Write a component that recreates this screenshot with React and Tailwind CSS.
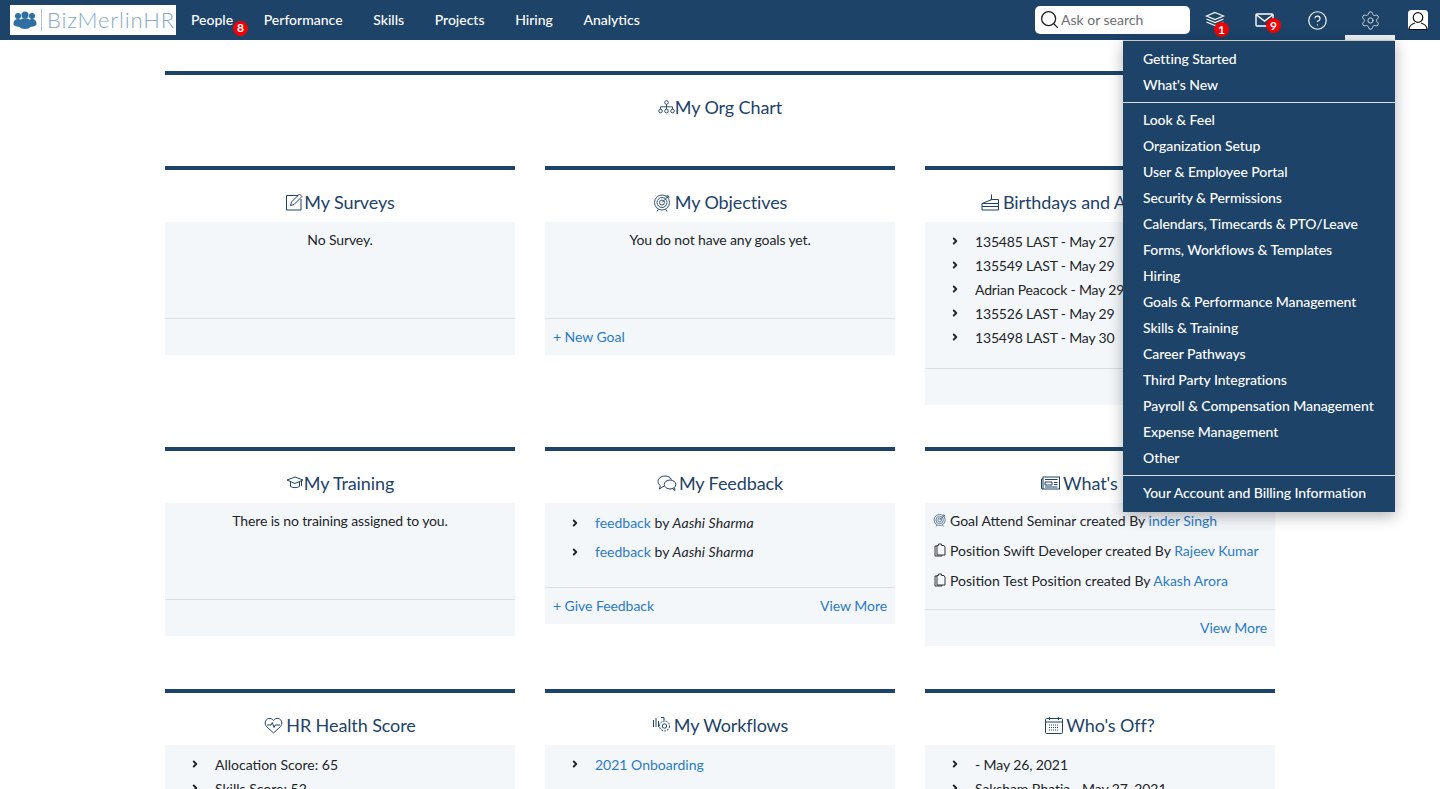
import React from "react";
import { Search, ChevronRight, CircleHelp, Settings } from "lucide-react";

const navItems = ["People", "Performance", "Skills", "Projects", "Hiring", "Analytics"];

const menuGroups = [
  ["Getting Started", "What's New"],
  [
    "Look & Feel",
    "Organization Setup",
    "User & Employee Portal",
    "Security & Permissions",
    "Calendars, Timecards & PTO/Leave",
    "Forms, Workflows & Templates",
    "Hiring",
    "Goals & Performance Management",
    "Skills & Training",
    "Career Pathways",
    "Third Party Integrations",
    "Payroll & Compensation Management",
    "Expense Management",
    "Other",
  ],
  ["Your Account and Billing Information"],
];

function Badge({ n, className }) {
  return (
    <span className={`absolute flex h-[15px] w-[15px] items-center justify-center rounded-full bg-[#f00000] text-[12px] font-bold leading-none text-white ${className}`}>
      {n}
    </span>
  );
}

function LogoMark() {
  return (
    <svg width="24" height="20" viewBox="0 0 24 20" fill="#2f6ea5">
      <circle cx="5" cy="6" r="3" />
      <circle cx="19" cy="6" r="3" />
      <circle cx="12" cy="5" r="3.6" />
      <path d="M0.5 14c0-3.5 2-5 4.5-5s3 1 3 1v7c-4 0-7.500-1-7.500-3z" />
      <path d="M23.500 14c0-3.500-2-5-4.500-5s-3 1-3 1v7c4 0 7.500-1 7.500-3z" />
      <path d="M6.500 13c0-3.500 2.500-4.800 5.500-4.800s5.500 1.300 5.500 4.800v3c0 2-2.500 3-5.500 3s-5.500-1-5.500-3z" />
    </svg>
  );
}

function LayersIcon() {
  return (
    <svg width="20" height="18" viewBox="0 0 20 18" fill="none" stroke="#fff" strokeWidth="1.200">
      <path d="M10 1.500 18.500 5 10 8.500 1.500 5z" />
      <path d="M1.500 8 10 11.500 18.500 8" />
      <path d="M1.500 11 10 14.500 18.500 11" />
    </svg>
  );
}

function MailIcon() {
  return (
    <svg width="19" height="14" viewBox="0 0 19 14" fill="none" stroke="#fff" strokeWidth="1.400">
      <rect x="1" y="1" width="17" height="12" rx="1" />
      <path d="m1 1.500 8.500 6.500L18 1.500" />
    </svg>
  );
}

function UserIcon() {
  return (
    <svg width="20" height="20" viewBox="0 0 20 20">
      <rect width="20" height="20" rx="3.500" fill="#fff" />
      <circle cx="10" cy="7.500" r="4.800" fill="none" stroke="#111" strokeWidth="1.200" />
      <path d="M1 19.500c0-3.500 3.500-5.800 6-6.500M19 19.500c0-3.500-3.500-5.800-6-6.500M1 19.500h18" fill="none" stroke="#111" strokeWidth="1.200" />
    </svg>
  );
}

function OrgIcon() {
  return (
    <svg width="17" height="14" viewBox="0 0 17 14" fill="none" stroke="#1d4369" strokeWidth="0.900">
      <circle cx="8.500" cy="2.500" r="1.800" />
      <circle cx="2.500" cy="11" r="1.800" />
      <circle cx="8.500" cy="11" r="1.800" />
      <circle cx="14.500" cy="11" r="1.800" />
      <path d="M8.500 4.300v4.900M2.500 9.200V6.800h12v2.400" />
    </svg>
  );
}

function SurveyIcon() {
  return (
    <svg width="19" height="18" viewBox="0 0 19 18" fill="none" stroke="#1d4369" strokeWidth="1">
      <path d="M13 2.500H1.500v14.500h14.500V6" />
      <path d="m5.500 12.500 1-3.500 8-8 2.500 2.500-8 8z" />
    </svg>
  );
}

function TargetIcon({ size = 19 }) {
  return (
    <svg width={size} height={size} viewBox="0 0 19 19" fill="none" stroke="#1d4369" strokeWidth="0.900">
      <circle cx="9" cy="9.500" r="7.500" />
      <circle cx="9" cy="9.500" r="5" />
      <circle cx="9" cy="9.500" r="2.500" />
      <path d="M9 9.500 15.500 3M13.500 2.500l2 .5.500 2M5 16.500l-1 2M13 16.500l1 2" />
    </svg>
  );
}

function CakeIcon() {
  return (
    <svg width="19" height="18" viewBox="0 0 19 18" fill="none" stroke="#1d4369" strokeWidth="1">
      <path d="M1 10.500 11 6.500h6.500v4H1zM1 10.500V17h16.500v-6.500M1 13.500h16.500" />
      <path d="M10.500 6.500V1.500M9.500 6.500h2" />
    </svg>
  );
}

function HatIcon() {
  return (
    <svg width="18" height="14" viewBox="0 0 18 14" fill="none" stroke="#1d4369" strokeWidth="1">
      <path d="M1 4 9 1l8 3-8 3.500z" />
      <path d="M4.500 6v4.500c2 1.500 7 1.500 9 0V6M15.500 5v5" />
    </svg>
  );
}

function ChatIcon() {
  return (
    <svg width="20" height="17" viewBox="0 0 20 17" fill="none" stroke="#1d4369" strokeWidth="1">
      <path d="M7 11.500H6L2.500 14l.8-3.500C1.800 9.500 1 8 1 6.500 1 3.500 4 1 8 1c3 0 5.500 1.300 6.500 3.500" />
      <ellipse cx="13" cy="9.500" rx="5.800" ry="4.500" />
      <path d="m15.500 13.500 2.500 2-.5-3" />
    </svg>
  );
}

function NewsIcon() {
  return (
    <svg width="19" height="14" viewBox="0 0 19 14" fill="none" stroke="#1d4369" strokeWidth="1">
      <rect x="2" y="1" width="16.500" height="12" />
      <path d="M2 3H.5v9.500L2 13M4 3.500h12.500M4 11h12.500M4 6h7v3H4zM13 6.500h3.500M13 8.500h3.500" />
    </svg>
  );
}

function ClipIcon() {
  return (
    <svg width="12" height="14" viewBox="0 0 12 14" fill="none" stroke="#333" strokeWidth="1">
      <path d="M3 3H1v10h7v-1" />
      <path d="M3 2.500h1.500V1h3v1.500H10L11 4v8H3z" />
    </svg>
  );
}

function HeartIcon() {
  return (
    <svg width="19" height="17" viewBox="0 0 19 17" fill="none" stroke="#1d4369" strokeWidth="1">
      <path d="M9.500 16 2.500 9.500C.2 7 1 2.500 4.500 1.500c2-.5 4 .3 5 2 1-1.700 3-2.500 5-2C18 2.500 18.800 7 16.500 9.500z" />
      <path d="M3 8h4l1.300-2.500 1.700 5 1.200-2.500H16" />
    </svg>
  );
}

function WorkflowIcon() {
  return (
    <svg width="20" height="18" viewBox="0 0 20 18" fill="none" stroke="#1d4369" strokeWidth="1">
      <path d="M1.500 4v7M4 2v9M6.500 5v6" />
      <circle cx="12.500" cy="10" r="2.200" />
      <circle cx="12.500" cy="10" r="5" strokeDasharray="2 1" />
      <path d="M9 1.500h3v3" />
    </svg>
  );
}

function CalendarIcon() {
  return (
    <svg width="18" height="17" viewBox="0 0 18 17" fill="none" stroke="#1d4369" strokeWidth="1">
      <rect x="0.500" y="1.500" width="17" height="15" rx="1" />
      <path d="M.5 5h17M4.500 0v3M13.500 0v3" />
      <path d="M4 8h10M4 10.500h10M4 13h10" strokeDasharray="1 1" />
    </svg>
  );
}

function Title({ icon, children }) {
  return (
    <div className="flex h-[52px] items-start justify-center pt-[20px] text-[18px] leading-[24px] tracking-[-0.1px] text-[#1d4369]">
      <span className="flex h-[24px] items-center">{icon}</span>
      <span>{children}</span>
    </div>
  );
}

function Card({ title, icon, footer, children }) {
  return (
    <section className="border-t-4 border-[#1d4369]">
      <Title icon={icon}>{title}</Title>
      <div className="bg-[#f4f7fa]">{children}</div>
      {footer !== undefined && (
        <div className="flex h-[37px] items-center justify-between border-t border-[#dcdfe2] bg-[#f4f7fa] px-2 pb-[2px] text-[14px] tracking-[-0.05px] text-[#2a7ac7]">
          {footer}
        </div>
      )}
    </section>
  );
}

function Bullet({ children, className = "h-[24px]" }) {
  return (
    <li className={`flex items-center pl-[25px] ${className}`}>
      <span className="flex w-[25px] shrink-0">
        <ChevronRight size={10} strokeWidth={4.5} className="text-[#212529]" />
      </span>
      <span className="whitespace-nowrap">{children}</span>
    </li>
  );
}

function Message({ children }) {
  return <div className="h-[96px] pt-[7px] text-center text-[14px] leading-[21px] tracking-[-0.13px] text-[#212529]">{children}</div>;
}

function Activity({ icon, children }) {
  return (
    <div className="flex h-[30px] items-center gap-[3px] whitespace-nowrap pl-[7px]">
      <span className="flex w-[15px] justify-center">{icon}</span>
      <span>{children}</span>
    </div>
  );
}

export default function App() {
  return (
    <div className="relative h-screen overflow-hidden bg-white font-['Lato','Open_Sans',sans-serif] text-[14px] text-[#212529]">
      {/* top nav */}
      <header className="flex h-[40px] items-center justify-between bg-[#1d4369]">
        <div className="flex items-center">
          <div className="ml-[10px] flex h-[30px] w-[166px] items-center bg-white pl-[3px]">
            <LogoMark />
            <span className="ml-[4px] h-[22px] w-px bg-[#a9c2d8]" />
            <span className="ml-[5px] text-[22px] font-light leading-none tracking-[0.85px] text-[#86a9c8]">BizMerlinHR</span>
          </div>
          <nav className="ml-[15px] flex gap-[30.6px] pb-[2px] font-medium text-white">
            {navItems.map((item) => (
              <a key={item} className="relative block">
                {item}
                {item === "People" && <Badge n="8" className="left-[42px] top-[12px]" />}
              </a>
            ))}
          </nav>
        </div>
        <div className="flex h-full items-center text-white">
          <div className="flex h-[28px] w-[155px] items-center rounded-[5px] bg-white pb-[1px] pl-[4px] text-[#6b6f73]">
            <Search size={21} strokeWidth={1.500} className="text-[#222]" />
            <span className="ml-[1px]">Ask or search</span>
          </div>
          <div className="relative flex h-full w-[49px] items-center justify-center">
            <LayersIcon />
            <Badge n="1" className="left-[24px] top-[22px]" />
          </div>
          <div className="relative flex h-full w-[50px] items-center justify-center">
            <MailIcon />
            <Badge n="9" className="left-[27px] top-[18px]" />
          </div>
          <div className="flex h-full w-[56px] items-center justify-center">
            <CircleHelp size={21} strokeWidth={1.300} />
          </div>
          <div className="flex h-full w-[50px] items-center justify-center border-b-[5px] border-[#eef1f3] pt-[5px]">
            <Settings size={21} strokeWidth={1.100} className="text-[#d5dbe1]" />
          </div>
          <div className="flex h-full w-[45px] items-center justify-center">
            <UserIcon />
          </div>
        </div>
      </header>

      {/* settings menu */}
      <div className="absolute left-[1123px] top-[40px] z-10 w-[272px] border-t border-[#c9c9c9] bg-[#1d4369] font-medium tracking-[-0.06px] text-white shadow-[0_4px_14px_rgba(0,0,0,0.3)]">
        {menuGroups.map((group, i) => (
          <ul key={i} className={i === 0 ? "pb-[5px] pt-[4px]" : i === 1 ? "border-t border-[#d8dde3] pb-[5px] pt-[3px]" : "border-t border-[#d8dde3] pb-[7px] pt-[3px]"}>
            {group.map((item) => (
              <li key={item} className="flex h-[26px] items-center whitespace-nowrap pl-[20px]">{item}</li>
            ))}
          </ul>
        ))}
      </div>

      <main className="mx-auto mt-[31px] w-[1110px]">
        <section className="h-[95px] border-t-4 border-[#1d4369]">
          <Title icon={<OrgIcon />}>My Org Chart</Title>
        </section>

        <div className="mb-[42px] grid grid-cols-3 items-start gap-x-[30px]">
          <Card title="My Surveys" icon={<SurveyIcon />} footer="">
            <Message>No Survey.</Message>
          </Card>
          <Card
            title="My Objectives"
            icon={<span className="mr-[3px]"><TargetIcon /></span>}
            footer={<a>+ New Goal</a>}
          >
            <Message>You do not have any goals yet.</Message>
          </Card>
          <Card title="Birthdays and Anniversaries" icon={<span className="mr-[3px]"><CakeIcon /></span>} footer="">
            <ul className="h-[146px] pt-[7px] tracking-[-0.18px]">
              <Bullet>135485 LAST - May 27</Bullet>
              <Bullet>135549 LAST - May 29</Bullet>
              <Bullet>Adrian Peacock - May 29</Bullet>
              <Bullet>135526 LAST - May 29</Bullet>
              <Bullet>135498 LAST - May 30</Bullet>
            </ul>
          </Card>
        </div>

        <div className="mb-[43px] grid grid-cols-3 items-start gap-x-[30px]">
          <Card title="My Training" icon={<HatIcon />} footer="">
            <Message>There is no training assigned to you.</Message>
          </Card>
          <Card
            title="My Feedback"
            icon={<span className="mr-[2px]"><ChatIcon /></span>}
            footer={
              <>
                <a>+ Give Feedback</a>
                <a>View More</a>
              </>
            }
          >
            <ul className="h-[84px] pt-[5px]">
              <Bullet className="h-[29px]"><a className="text-[#2a7ac7]">feedback</a> by <em className="tracking-[0.1px]">Aashi Sharma</em></Bullet>
              <Bullet className="h-[29px]"><a className="text-[#2a7ac7]">feedback</a> by <em className="tracking-[0.1px]">Aashi Sharma</em></Bullet>
            </ul>
          </Card>
          <Card
            title="What's New"
            icon={<span className="mr-[3px] flex"><NewsIcon /></span>}
            footer={
              <>
                <span />
                <a>View More</a>
              </>
            }
          >
            <div className="h-[106px] pt-[2px]">
              <Activity icon={<TargetIcon size={14} />}>Goal Attend Seminar created By <a className="text-[#2a7ac7]">inder Singh</a></Activity>
              <Activity icon={<ClipIcon />}>Position Swift Developer created By <a className="text-[#2a7ac7]">Rajeev Kumar</a></Activity>
              <Activity icon={<ClipIcon />}>Position Test Position created By <a className="text-[#2a7ac7]">Akash Arora</a></Activity>
            </div>
          </Card>
        </div>

        <div className="grid grid-cols-3 items-start gap-x-[30px]">
          <Card title="HR Health Score" icon={<span className="mr-[3px]"><HeartIcon /></span>}>
            <ul className="pt-[7px]">
              <Bullet>Allocation Score: 65</Bullet>
              <Bullet>Skills Score: 52</Bullet>
            </ul>
          </Card>
          <Card title="My Workflows" icon={<span className="mr-[2px]"><WorkflowIcon /></span>}>
            <ul className="pt-[7px]">
              <Bullet><a className="text-[#2a7ac7]">2021 Onboarding</a></Bullet>
              <li className="h-[24px]" />
            </ul>
          </Card>
          <Card title="Who's Off?" icon={<span className="mr-[3px]"><CalendarIcon /></span>}>
            <ul className="pt-[7px] tracking-[-0.1px]">
              <Bullet>- May 26, 2021</Bullet>
              <Bullet>Saksham Bhatia - May 27, 2021</Bullet>
            </ul>
          </Card>
        </div>
      </main>
    </div>
  );
}
